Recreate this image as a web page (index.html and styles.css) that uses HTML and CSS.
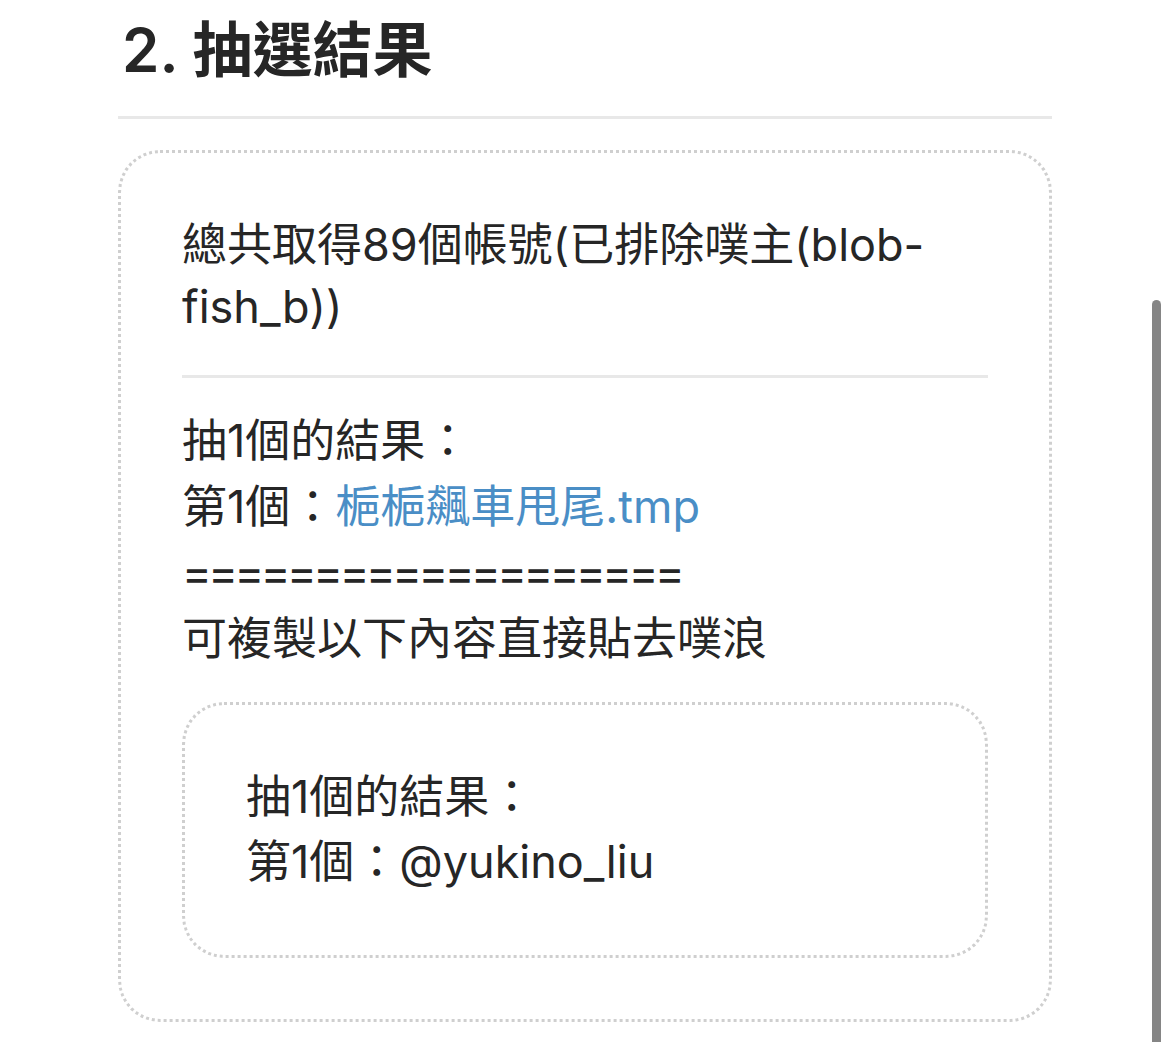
FILE: index.html
```html
<!DOCTYPE html>
<html lang="zh-Hant">
<head>
    <meta charset="UTF-8">
    <title>抽選結果</title>
    <link rel="stylesheet" href="styles.css">
</head>
<body>
<div class="page">
    <h2 class="titel">2. 抽選結果</h2>

    <div class="boks">
        <p class="info">總共取得89個帳號(已排除噗主(blob-fish_b))</p>
        <hr class="skille">
        <div class="resultat">
            抽1個的結果：<br>
            第1個：<a href="#">梔梔飆車甩尾.tmp</a><br>
            <span class="linje">===================</span><br>
            可複製以下內容直接貼去噗浪
        </div>
        <div class="kopi">
            抽1個的結果：<br>
            第1個：@yukino_liu
        </div>
    </div>
</div>
<div class="rullefelt"></div>
</body>
</html>
```

FILE: styles.css
```css
html {
    background-color: white;
    overflow: hidden;
}
body {
    margin: 0;
    font-family: Inter, "Noto Sans CJK TC", sans-serif;
    color: #262626;
}
.page {
    width: 934px;
    margin: 0 auto;
    padding-top: 14px;
}
.titel {
    margin: 0;
    font-size: 60px;
    line-height: 72px;
    font-weight: 600;
    color: #262626;
    padding: 0 4px 30px;
    border-bottom: 3px solid #e8e8e8;
}
.boks {
    margin-top: 31px;
    border: 3px dotted #cfcfcf;
    border-radius: 42px;
    padding: 61px 61px 61px 61px;
    font-size: 45px;
}
.info {
    margin: 0;
    line-height: 62px;
}
.skille {
    border: none;
    border-top: 3px solid #e8e8e8;
    margin: 37px 0 30px;
}
.resultat {
    line-height: 66px;
}
.resultat a {
    color: #4a8ec6;
    text-decoration: none;
}
.linje {
    letter-spacing: -3.5px;
}
.kopi {
    margin-top: 30px;
    border: 3px dotted #cfcfcf;
    border-radius: 42px;
    padding: 59px 61px 61px;
    line-height: 65px;
}
.rullefelt {
    position: fixed;
    right: 9px;
    top: 300px;
    width: 9px;
    height: 760px;
    border-radius: 5px;
    background-color: #858585;
}
```
